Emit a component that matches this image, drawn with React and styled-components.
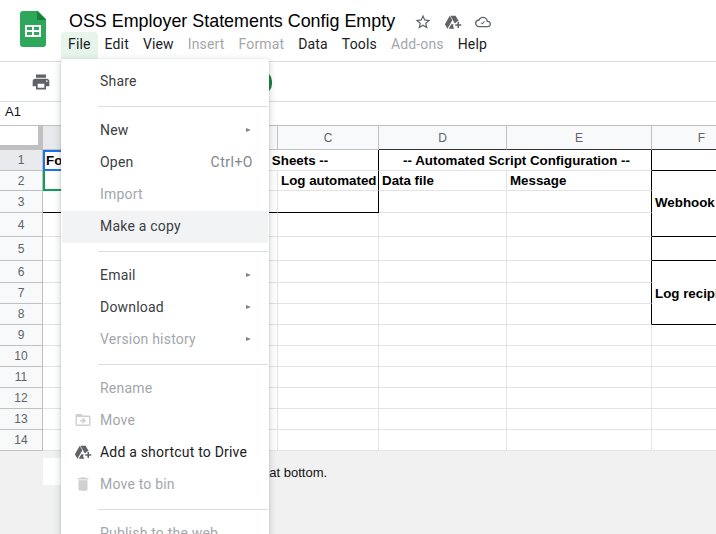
import React from "react";
import styled, { createGlobalStyle } from "styled-components";

const GlobalStyle = createGlobalStyle`
  html, body {
    margin: 0;
    height: 100%;
    background: #fff;
    font-family: "Liberation Sans", Arial, sans-serif;
  }
`;

const Page = styled.div`
  position: relative;
  width: 716px;
  height: 534px;
  overflow: hidden;
  display: flex;
  flex-direction: column;
  background: #f1f1f1;
`;

const Header = styled.header`
  display: flex;
  height: 62px;
  box-sizing: border-box;
  padding: 11px 0 0 20px;
  background: #fff;
  border-bottom: 1px solid #dadce0;
`;

const Logo = styled.svg`
  flex: none;
  width: 26px;
  height: 36px;
`;

const HeaderBody = styled.div`
  margin-left: 15px;
  display: flex;
  flex-direction: column;
`;

const TitleRow = styled.div`
  display: flex;
  align-items: center;
  height: 21px;
  margin-left: 8px;
`;

const Title = styled.div`
  font-size: 17.9px;
  color: #000;
  white-space: nowrap;
  line-height: 21px;
  margin-right: 19px;
`;

const TitleIcon = styled.svg`
  flex: none;
  width: ${({ $size }) => $size || 18}px;
  height: ${({ $size }) => $size || 18}px;
  margin-right: ${({ $gap }) => $gap || 0}px;
  fill: #5f6368;
`;

const MenuBar = styled.nav`
  display: flex;
`;

const MenuButton = styled.div`
  height: 27px;
  padding: 0 7px;
  font-family: Roboto, sans-serif;
  font-size: 14px;
  letter-spacing: 0.15px;
  line-height: 25px;
  border-radius: 4px 4px 0 0;
  color: ${({ $disabled }) => ($disabled ? "#a3a7ab" : "#202124")};
  background: ${({ $open }) => ($open ? "#e6f4ea" : "transparent")};
`;

const Toolbar = styled.div`
  display: flex;
  align-items: center;
  height: 40px;
  box-sizing: border-box;
  padding-left: 31px;
  background: #fff;
  border-bottom: 1px solid #dadce0;
`;

const ToolIcon = styled.svg`
  width: 20px;
  height: 20px;
  fill: #5f6368;
`;

const ShareButton = styled.div`
  width: 91px;
  height: 23px;
  margin-left: 130px;
  margin-top: 1px;
  border-radius: 4px 10px 10px 4px;
  background: #188038;
`;

const FormulaBar = styled.div`
  height: 23px;
  padding-left: 5px;
  font-size: 13px;
  line-height: 20px;
  color: #111;
  background: #fff;
`;

const Sheet = styled.div`
  display: grid;
  grid-template-columns: 43px 117px 118px 101px 128px 145px 100px;
  grid-template-rows: 25px 21px 20px 22px 24px 24px 22px repeat(8, 21px);
  width: 752px;
  background: #fff;
`;

const Corner = styled.div`
  box-sizing: border-box;
  background: #fff;
  border-top: 1px solid #c0c0c0;
  border-right: 5px solid #c0c0c0;
  border-bottom: 5px solid #c0c0c0;
`;

const ColHead = styled.div`
  box-sizing: border-box;
  display: flex;
  align-items: center;
  justify-content: center;
  font-size: 12px;
  color: #5f6368;
  background: ${({ $active }) => ($active ? "#e8eaed" : "#f8f9fa")};
  border-top: 1px solid #c0c0c0;
  border-right: 1px solid #c0c0c0;
  border-bottom: 1px solid ${({ $dark }) => ($dark ? "#333" : "#c0c0c0")};
`;

const RowHead = styled.div`
  box-sizing: border-box;
  display: flex;
  align-items: center;
  justify-content: center;
  font-size: 12px;
  color: #5f6368;
  background: ${({ $active }) => ($active ? "#e8eaed" : "#f8f9fa")};
  border-right: 1px solid #c0c0c0;
  border-bottom: 1px solid #c0c0c0;
`;

const Cell = styled.div`
  position: relative;
  box-sizing: border-box;
  display: flex;
  align-items: center;
  justify-content: ${({ $center }) => ($center ? "center" : "flex-start")};
  padding: ${({ $nudge }) => ($nudge > 0 ? $nudge : 0)}px 0 ${({ $nudge }) => ($nudge < 0 ? -$nudge : 0)}px 3px;
  min-width: 0;
  font-size: 13.33px;
  font-weight: 700;
  color: #000;
  white-space: nowrap;
  grid-column: span ${({ $cols }) => $cols || 1};
  grid-row: span ${({ $rows }) => $rows || 1};
  border-right: 1px solid ${({ $right }) => ($right ? "#000" : "#e2e3e3")};
  border-bottom: 1px solid ${({ $bottom }) => ($bottom ? "#000" : "#e2e3e3")};
`;

const Selection = styled.div`
  position: absolute;
  top: 0;
  left: 0;
  width: 117px;
  height: 21px;
  box-sizing: border-box;
  border: 2px solid #1a73e8;
  pointer-events: none;
`;

const FillRange = styled.div`
  position: absolute;
  top: 0;
  left: 0;
  width: 117px;
  height: 20px;
  box-sizing: border-box;
  border-left: 2px solid #0f9d58;
  border-bottom: 2px solid #0f9d58;
  pointer-events: none;
`;

const AddRows = styled.div`
  display: flex;
  align-items: flex-start;
  gap: 6px;
  height: 27px;
  margin: 7px 0 0 43px;
  font-size: 13px;
  line-height: 29px;
  color: #111;
`;

const AddButton = styled.div`
  width: 60px;
  height: 27px;
  background: #fff;
`;

const RowCount = styled.div`
  width: 90px;
  height: 27px;
  background: #fff;
`;

const Menu = styled.div`
  position: absolute;
  top: 59px;
  left: 61px;
  width: 208px;
  padding: 6px 0;
  border-radius: 4px;
  background: #fff;
  box-shadow: 0 2px 6px 2px rgba(60, 64, 67, 0.15), 0 1px 2px 0 rgba(60, 64, 67, 0.3);
  font-family: Roboto, sans-serif;
  font-size: 14px;
  letter-spacing: 0.2px;
`;

const Item = styled.div`
  position: relative;
  display: flex;
  align-items: center;
  box-sizing: border-box;
  height: 32px;
  padding: 0 16px 0 39px;
  color: ${({ $disabled, $strong }) => ($disabled ? "#a3a7ab" : $strong ? "#202124" : "#3c4043")};
`;

const HoverItem = styled(Item)`
  margin: 1px 1px -1px;
  padding: 0 15px 2px 38px;
  background: #f1f3f4;
`;

const ItemIcon = styled.svg`
  position: absolute;
  left: 13px;
  width: 18px;
  height: 18px;
  fill: ${({ $color }) => $color || "#5f6368"};
`;

const Shortcut = styled.span`
  margin-left: auto;
  letter-spacing: 0.5px;
  color: #80868b;
`;

const Arrow = styled.span`
  margin-left: auto;
  margin-right: 2px;
  width: 0;
  height: 0;
  border-left: 5px solid #80868b;
  border-top: 2.5px solid transparent;
  border-bottom: 2.5px solid transparent;
`;

const Separator = styled.div`
  height: 1px;
  margin: 9px 1px 7px 37px;
  background: #dadce0;
`;

const PrintIcon = () => (
  <ToolIcon viewBox="0 0 24 24">
    <path d="M19 8H5c-1.66 0-3 1.34-3 3v6h4v4h12v-4h4v-6c0-1.66-1.34-3-3-3zm-3 11H8v-5h8v5zm3-7c-.55 0-1-.45-1-1s.45-1 1-1 1 .45 1 1-.45 1-1 1zm-1-9H6v4h12V3z" />
  </ToolIcon>
);

const drivePath =
  "M7.71 3.5 1.15 15l3.43 6 6.55-11.5zM12.6 15H9.73L6.3 21h7.6a6 6 0 0 1-1.3-6zM20 15v-3h-2v3h-3v2h3v3h2v-3h3v-2zM19.6 10.6 15.42 3.5H8.58l5.7 10h.72a6 6 0 0 1 4.6-2.9z";

const blankRows = [9, 10, 11, 12, 13, 14];

export default function App() {
  return (
    <Page>
      <GlobalStyle />
      <Header>
        <Logo viewBox="0 0 26 36">
          <path d="M3 0h15l8 8v25a3 3 0 0 1-3 3H3a3 3 0 0 1-3-3V3a3 3 0 0 1 3-3z" fill="#2da85a" />
          <path d="M17 0l9 9h-9z" fill="#188038" />
          <path d="M5 14h16v12H5zM7 16v3h5v-3zM14 16v3h5v-3zM7 21v3h5v-3zM14 21v3h5v-3z" fill="#fff" fillRule="evenodd" />
        </Logo>
        <HeaderBody>
          <TitleRow>
            <Title>OSS Employer Statements Config Empty</Title>
            <TitleIcon viewBox="0 0 24 24" $gap={12}>
              <path d="M22 9.24l-7.19-.62L12 2 9.19 8.63 2 9.24l5.46 4.73L5.82 21 12 17.27 18.18 21l-1.63-7.03L22 9.24zM12 15.4l-3.76 2.27 1-4.28-3.32-2.88 4.38-.38L12 6.1l1.71 4.04 4.38.38-3.32 2.88 1 4.28L12 15.4z" />
            </TitleIcon>
            <TitleIcon viewBox="0 0 24 24" $gap={13}>
              <path d={drivePath} />
            </TitleIcon>
            <TitleIcon viewBox="0 0 24 24" $size={16}>
              <path d="M19.35 10.04C18.67 6.59 15.64 4 12 4 9.11 4 6.6 5.64 5.35 8.04 2.34 8.36 0 10.91 0 14c0 3.31 2.69 6 6 6h13c2.76 0 5-2.24 5-5 0-2.64-2.05-4.78-4.65-4.96zM19 18H6c-2.21 0-4-1.79-4-4s1.79-4 4-4h.71C7.37 7.69 9.48 6 12 6c3.04 0 5.5 2.46 5.5 5.5v.5H19c1.66 0 3 1.34 3 3s-1.34 3-3 3z" />
              <path d="M10.8 15.6 9 13.8l1-1 .8.8 3-3 1 1z" />
            </TitleIcon>
          </TitleRow>
          <MenuBar>
            <MenuButton $open>File</MenuButton>
            <MenuButton>Edit</MenuButton>
            <MenuButton>View</MenuButton>
            <MenuButton $disabled>Insert</MenuButton>
            <MenuButton $disabled>Format</MenuButton>
            <MenuButton>Data</MenuButton>
            <MenuButton>Tools</MenuButton>
            <MenuButton $disabled>Add-ons</MenuButton>
            <MenuButton>Help</MenuButton>
          </MenuBar>
        </HeaderBody>
      </Header>

      <Toolbar>
        <PrintIcon />
        <ShareButton />
      </Toolbar>

      <FormulaBar>A1</FormulaBar>

      <Sheet>
        <Corner />
        <ColHead $active>A</ColHead>
        <ColHead>B</ColHead>
        <ColHead>C</ColHead>
        <ColHead $dark>D</ColHead>
        <ColHead $dark>E</ColHead>
        <ColHead $dark>F</ColHead>

        <RowHead $active>1</RowHead>
        <Cell $cols={3} $right>
          For automated reports with Google Sheets --
          <Selection />
        </Cell>
        <Cell $cols={2} $center $right>-- Automated Script Configuration --</Cell>
        <Cell $bottom />

        <RowHead>2</RowHead>
        <Cell><FillRange /></Cell>
        <Cell />
        <Cell $right>Log automated</Cell>
        <Cell>Data file</Cell>
        <Cell $right>Message</Cell>
        <Cell $rows={3} $bottom $nudge={-2}>Webhook URL</Cell>

        <RowHead>3</RowHead>
        <Cell $bottom />
        <Cell $bottom />
        <Cell $bottom $right />
        <Cell />
        <Cell $right />

        <RowHead>4</RowHead>
        <Cell />
        <Cell />
        <Cell />
        <Cell />
        <Cell $right />

        <RowHead>5</RowHead>
        <Cell />
        <Cell />
        <Cell />
        <Cell />
        <Cell $right />
        <Cell $bottom />

        <RowHead>6</RowHead>
        <Cell />
        <Cell />
        <Cell />
        <Cell />
        <Cell $right />
        <Cell $rows={3} $bottom $nudge={2}>Log recipients</Cell>

        <RowHead>7</RowHead>
        <Cell />
        <Cell />
        <Cell />
        <Cell />
        <Cell $right />

        <RowHead>8</RowHead>
        <Cell />
        <Cell />
        <Cell />
        <Cell />
        <Cell $right />

        {blankRows.map((n) => (
          <React.Fragment key={n}>
            <RowHead>{n}</RowHead>
            <Cell />
            <Cell />
            <Cell />
            <Cell />
            <Cell />
            <Cell />
          </React.Fragment>
        ))}
      </Sheet>

      <AddRows>
        <AddButton />
        <RowCount />
        more rows at bottom.
      </AddRows>

      <Menu>
        <Item>Share</Item>
        <Separator />
        <Item>New<Arrow /></Item>
        <Item>Open<Shortcut>Ctrl+O</Shortcut></Item>
        <Item $disabled>Import</Item>
        <HoverItem>Make a copy</HoverItem>
        <Separator />
        <Item>Email<Arrow /></Item>
        <Item>Download<Arrow /></Item>
        <Item $disabled>Version history<Arrow /></Item>
        <Separator />
        <Item $disabled>Rename</Item>
        <Item $disabled>
          <ItemIcon viewBox="0 0 24 24" $color="#cfd0d2">
            <path d="M20 6h-8l-2-2H4c-1.1 0-1.99.9-1.99 2L2 18c0 1.1.9 2 2 2h16c1.1 0 2-.9 2-2V8c0-1.1-.9-2-2-2zm0 12H4V8h16v10zm-8.01-9l-1.41 1.41L12.16 12H8v2h4.16l-1.59 1.59L11.99 17 16 13.01 11.99 9z" />
          </ItemIcon>
          Move
        </Item>
        <Item $strong>
          <ItemIcon viewBox="0 0 24 24">
            <path d={drivePath} />
          </ItemIcon>
          Add a shortcut to Drive
        </Item>
        <Item $disabled>
          <ItemIcon viewBox="0 0 24 24" $color="#cfd0d2">
            <path d="M6 19c0 1.1.9 2 2 2h8c1.1 0 2-.9 2-2V7H6v12zM19 4h-3.5l-1-1h-5l-1 1H5v2h14V4z" />
          </ItemIcon>
          Move to bin
        </Item>
        <Separator />
        <Item $disabled>Publish to the web</Item>
      </Menu>
    </Page>
  );
}
